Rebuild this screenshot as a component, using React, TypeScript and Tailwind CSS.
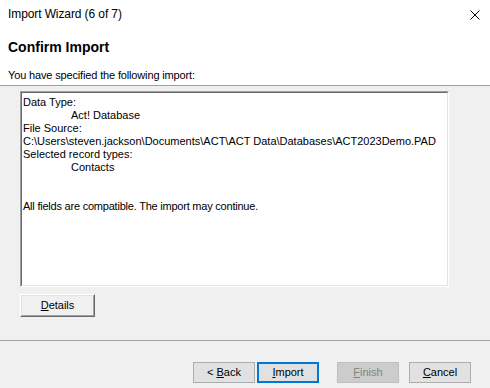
import React from 'react';

const summary = [
  { text: 'Data Type:', indent: false },
  { text: 'Act! Database', indent: true },
  { text: 'File Source:', indent: false },
  { text: 'C:\\Users\\steven.jackson\\Documents\\ACT\\ACT Data\\Databases\\ACT2023Demo.PAD', indent: false },
  { text: 'Selected record types:', indent: false },
  { text: 'Contacts', indent: true },
  { text: '', indent: false },
  { text: '', indent: false },
  { text: 'All fields are compatible. The import may continue.', indent: false, tight: true }
];

function WizardButton({
  hotkey,
  rest,
  prefix = '',
  variant = 'normal'
}: {
  hotkey: string;
  rest: string;
  prefix?: string;
  variant?: 'normal' | 'default' | 'disabled';
}) {
  const styles = {
    normal: 'border border-[#adadad] bg-[#e1e1e1] text-black',
    default: 'border-2 border-[#0078d7] bg-[#e1e1e1] text-black',
    disabled: 'border border-[#bfbfbf] bg-[#cccccc] text-[#838383]'
  };
  return (
    <button
      className={`w-[62px] h-[21px] flex items-center justify-center text-[11px] leading-none whitespace-pre ${styles[variant]}`}
    >
      {prefix}
      <span className="underline underline-offset-[1px]">{hotkey}</span>
      {rest}
    </button>
  );
}

export default function App() {
  return (
    <div
      className="w-[490px] h-[388px] bg-[#f0f0f0] flex flex-col overflow-hidden text-black"
      style={{ fontFamily: '"Liberation Sans", Arial, sans-serif' }}
    >
      <div className="h-[86px] bg-white border-b border-[#a0a0a0] relative px-2">
        <div className="pt-[6px] text-[12px] leading-[16px] tracking-[-0.1px]">Import Wizard (6 of 7)</div>
        <svg
          className="absolute right-[10px] top-[10px]"
          width="10"
          height="10"
          viewBox="0 0 10 10"
          fill="none"
          stroke="#000"
          strokeWidth="1"
        >
          <path d="M0.5 0.5 L9.5 9.5 M9.5 0.5 L0.5 9.5" />
        </svg>
        <div className="mt-[16px] text-[14px] font-bold leading-[18px]">Confirm Import</div>
        <div className="mt-[12px] text-[11px] leading-[14px] tracking-[-0.15px]">
          You have specified the following import:
        </div>
      </div>

      <div className="flex-1 flex flex-col pl-[20px]">
        <div className="mt-[5px] w-[429px] h-[196px] border-t border-l border-[#a0a0a0] border-b-white border-r-white border-b border-r">
          <div className="h-full bg-white border-t border-l border-[#696969] border-b border-r border-b-[#e3e3e3] border-r-[#e3e3e3] px-[1px] pt-[3px] text-[11px] leading-[13px]">
            {summary.map((line, i) => (
              <div
                key={i}
                className={`h-[13px] whitespace-nowrap ${line.indent ? 'pl-[48px]' : ''} ${line.tight ? 'tracking-[-0.22px]' : ''}`}
              >
                {line.text}
              </div>
            ))}
          </div>
        </div>

        <div className="mt-[7px] w-[75px] h-[23px] border-t border-l border-white border-b border-r border-b-[#696969] border-r-[#696969]">
          <button className="w-full h-full border-t border-l border-[#e3e3e3] border-b border-r border-b-[#a0a0a0] border-r-[#a0a0a0] bg-[#f0f0f0] text-[11px] leading-none flex items-center justify-center">
            <span className="underline underline-offset-[1px]">D</span>etails
          </button>
        </div>
      </div>

      <div className="h-[48px] border-t border-[#a0a0a0] flex items-start pl-[193px] pt-[21px]">
        <WizardButton prefix="< " hotkey="B" rest="ack" />
        <div className="ml-[2px]">
          <WizardButton hotkey="I" rest="mport" variant="default" />
        </div>
        <div className="ml-[18px]">
          <WizardButton hotkey="F" rest="inish" variant="disabled" />
        </div>
        <div className="ml-[10px]">
          <WizardButton hotkey="C" rest="ancel" />
        </div>
      </div>
    </div>
  );
}
